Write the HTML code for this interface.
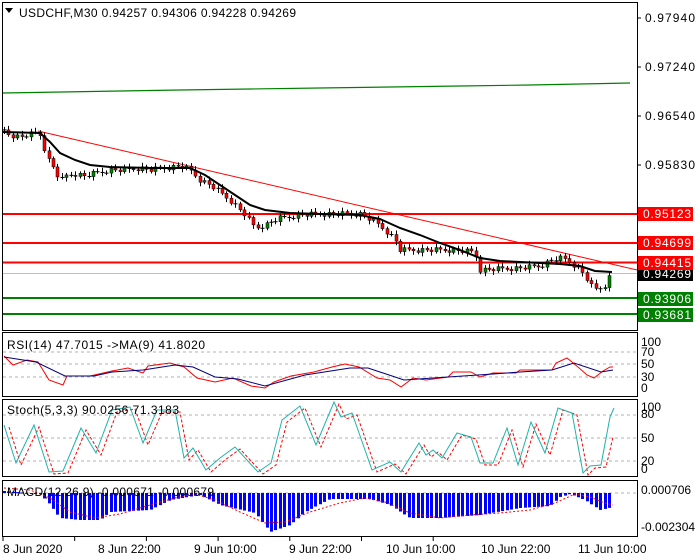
<!DOCTYPE html>
<html><head><meta charset="utf-8"><style>
body{margin:0;background:#fff;width:700px;height:560px;overflow:hidden;font-family:"Liberation Sans",sans-serif;}
svg{position:absolute;left:0;top:0}
text{font-family:"Liberation Sans",sans-serif;font-size:12px;fill:#000}
</style></head><body>
<svg id="s" width="700" height="560" xmlns="http://www.w3.org/2000/svg">
<g fill="none" stroke="#000" stroke-width="1">
<rect x="2.5" y="2.5" width="635" height="328"/>
<rect x="2.5" y="332.5" width="635" height="64"/>
<rect x="2.5" y="399.5" width="635" height="77"/>
<rect x="2.5" y="480.5" width="635" height="56"/>
</g>
<line x1="3" y1="273.5" x2="637" y2="273.5" stroke="#c0c0c0"/>
<polyline points="3,93 120,91 180,90 250,89 320,88 390,87 460,86 530,85 630,83" fill="none" stroke="#008000" stroke-width="1.2"/>
<line x1="38" y1="131" x2="637" y2="270" stroke="#ff0000" stroke-width="1"/>
<g stroke="#ff0000" stroke-width="2">
<line x1="3" y1="214" x2="637" y2="214"/><line x1="3" y1="243" x2="637" y2="243"/><line x1="3" y1="262.5" x2="637" y2="262.5"/></g>
<g stroke="#008000" stroke-width="2">
<line x1="3" y1="298" x2="637" y2="298"/><line x1="3" y1="314" x2="637" y2="314"/></g>
<g id="candles"></g>
<polyline points="3,132 40,133 50,142 60,153 75,160 90,165 110,167 150,168 190,168 205,175 220,185 235,195 250,205 265,210 290,213 320,214 360,215 380,219 400,228 420,235 440,243 460,250 480,258 500,261 520,262 540,263 560,264 580,266 595,271 612,272" fill="none" stroke="#000" stroke-width="2"/>
<g stroke="#b0b0b0" stroke-dasharray="3,3"><line x1="3" y1="352" x2="637" y2="352"/><line x1="3" y1="364" x2="637" y2="364"/><line x1="3" y1="377" x2="637" y2="377"/></g>
<polyline fill="none" stroke="#ff0000" points="4,356 13,365 27,360 38,362 49,380 63,385 67,376 90,376 112,371 128,368 143,373 148,366 170,363 184,367 197,378 215,382 233,378 251,386 265,388 274,382 291,376 314,372 332,367 345,364 359,367 377,378 390,380 401,387 413,378 426,380 448,377 453,372 471,372 480,377 493,373 516,373 520,370 552,370 556,363 567,358 578,367 587,375 594,378 603,371 610,367 613,367"/>
<polyline fill="none" stroke="#000080" points="4,357 36,362 65,376 94,376 112,372 143,370 175,365 193,367 215,377 238,379 265,386 305,375 350,368 368,368 404,380 448,377 493,374 520,372 552,370 574,363 601,372 613,370"/>
<g stroke="#b0b0b0" stroke-dasharray="3,3"><line x1="3" y1="415" x2="637" y2="415"/><line x1="3" y1="438" x2="637" y2="438"/><line x1="3" y1="461" x2="637" y2="461"/></g>
<polyline fill="none" stroke="#ff0000" stroke-dasharray="3,2" transform="translate(5,2)" points="4,425 16,463 34,425 49,472 63,471 81,428 96,453 112,410 130,407 143,443 157,410 175,410 184,458 193,448 206,470 220,458 235,447 258,472 271,463 282,420 300,406 316,445 334,402 341,417 352,413 372,470 390,462 401,472 419,443 426,455 433,450 442,458 457,433 471,437 480,463 493,463 507,428 518,465 531,422 545,453 558,408 572,413 583,473 590,466 601,465 608,435"/>
<polyline fill="none" stroke="#20b2aa" points="4,425 16,463 34,425 49,472 63,471 81,428 96,453 112,410 130,407 143,443 157,410 175,410 184,458 193,448 206,470 220,458 235,447 258,472 271,463 282,420 300,406 316,445 334,402 341,417 352,413 372,470 390,462 401,472 419,443 426,455 433,450 442,458 457,433 471,437 480,463 493,463 507,428 518,465 531,422 545,453 558,408 572,413 583,473 590,466 601,465 610,417 614,408"/>
<line x1="3" y1="493" x2="637" y2="493" stroke="#b0b0b0" stroke-dasharray="3,3"/>
<g id="macd"></g>
<polyline fill="none" stroke="#ff0000" stroke-dasharray="2,2" points="4,488 30,490 50,498 70,512 95,518 120,514 150,505 175,498 195,494 215,500 240,512 265,523 285,522 310,512 340,503 365,498 385,502 410,513 440,518 470,515 500,513 530,510 555,503 575,494 590,497 605,503 613,505"/>
<path d="M5,8 L13,8 L9,13 Z" fill="#000"/>
<text x="19" y="17" textLength="277">USDCHF,M30  0.94257 0.94306 0.94228 0.94269</text>
<text x="7" y="349" textLength="198">RSI(14) 47.7015  -&gt;MA(9) 41.8020</text>
<text x="7" y="414" textLength="172">Stoch(5,3,3) 90.0256 71.3183</text>
<text x="7" y="496" textLength="207">MACD(12,26,9) -0.000671 -0.000679</text>
<g id="ax"></g>
</svg>
<script>
var NS="http://www.w3.org/2000/svg",s=document.getElementById('s');
function el(p,t,a){var e=document.createElementNS(NS,t);for(var k in a)e.setAttribute(k,a[k]);p.appendChild(e);return e;}
function interp(pts,x){for(var i=1;i<pts.length;i++){if(x<=pts[i][0]){var a=pts[i-1],b=pts[i];return a[1]+(b[1]-a[1])*(x-a[0])/(b[0]-a[0]);}}return pts[pts.length-1][1];}
var P=[[3,130],[10,135],[20,137],[35,133],[40,135],[43,145],[47,158],[52,165],[57,175],[62,180],[67,175],[75,174],[85,176],[95,173],[110,170],[125,170],[140,168],[150,170],[165,168],[180,166],[190,170],[200,180],[210,185],[230,200],[245,215],[255,228],[265,225],[280,218],[300,215],[320,214],[340,214],[360,214],[375,222],[385,230],[395,240],[400,250],[450,250],[475,252],[478,270],[520,268],[540,266],[552,260],[562,258],[570,262],[580,270],[585,275],[590,285],[597,290],[605,285],[612,272]];
var g=document.getElementById('candles'),prev=interp(P,3),k=0;
for(var x=4;x<=612;x+=4.45){k++;var c=interp(P,x)+((k*37)%7-3)*0.8,o=prev;prev=c;var hi=Math.min(o,c)-2-(k%3),lo=Math.max(o,c)+2+(k%2)*2;var xx=Math.round(x)+0.5;
el(g,'line',{x1:xx,y1:hi,x2:xx,y2:lo,stroke:'#000'});
var h=Math.abs(c-o);if(h<1){el(g,'line',{x1:xx-2,y1:c,x2:xx+2,y2:c,stroke:'#000'});}else el(g,'rect',{x:xx-1.5,y:Math.min(o,c),width:3,height:h,fill:c<o?'#008000':'#ff0000',stroke:'#000','stroke-width':0.5});}
var M=[[4,491],[40,494],[50,505],[60,518],[80,520],[100,520],[110,512],[150,510],[170,500],[200,495],[220,505],[255,513],[270,532],[290,525],[305,512],[330,499],[370,499],[390,505],[410,518],[440,518],[480,515],[520,508],[550,506],[560,497],[570,494],[585,500],[600,510],[613,507]];
var m=document.getElementById('macd');
for(var x=4;x<=613;x+=4.45){var y=interp(M,x);var xx=Math.round(x);el(m,'rect',{x:xx-1,y:Math.min(493,y),width:3,height:Math.max(1,Math.abs(y-493)),fill:'#0000ff'});}
var ax=document.getElementById('ax');
function tx(x,y,str,w,st){var a={x:x,y:y};if(w)a.textLength=w;if(st)a.style=st;var t=el(ax,'text',a);t.textContent=str;}
[[0.97940,18],[0.97240,67],[0.96540,116],[0.95830,165]].forEach(function(v){el(ax,'line',{x1:637,y1:v[1],x2:641,y2:v[1],stroke:'#000'});tx(645,v[1]+4,v[0].toFixed(5),50);});
[["0.95123",214,"#ff0000"],["0.94699",243,"#ff0000"],["0.94269",274,"#000"],["0.94415",263,"#ff0000"],["0.93906",299,"#008000"],["0.93681",315,"#008000"]].forEach(function(v){el(ax,'rect',{x:638,y:v[1]-7,width:55,height:14,fill:v[2]});tx(643,v[1]+4,v[0],48,'fill:#fff');});
[["100",346],["70",356],["50",368],["30",381],["0",392],["100",411],["80",418],["50",442],["20",465],["0",473],["0.000706",494],["-0.002304",531]].forEach(function(v){tx(641,v[1],v[0]);});
[["8 Jun 2020",3],["8 Jun 22:00",98],["9 Jun 10:00",194],["9 Jun 22:00",289],["10 Jun 10:00",386],["10 Jun 22:00",481],["11 Jun 10:00",578]].forEach(function(v,i){el(ax,'line',{x1:3+i*71.7,y1:537,x2:3+i*71.7,y2:541,stroke:'#000'});tx(v[1],553,v[0]);});
</script>
</body></html>
